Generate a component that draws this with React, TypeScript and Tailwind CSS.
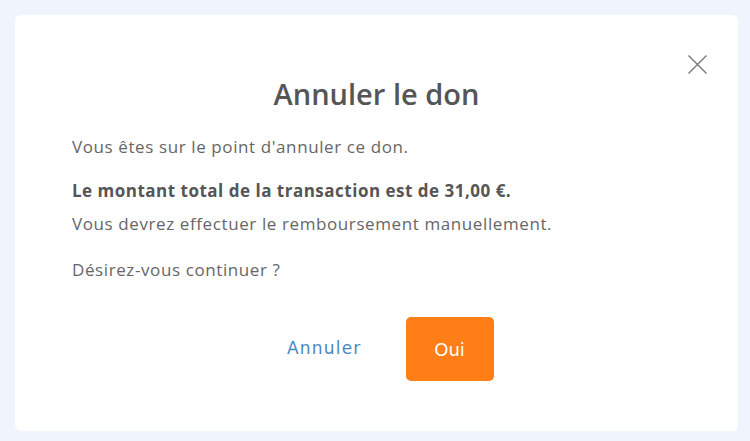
import React from "react";

export default function App() {
  return (
    <div className="min-h-[441px] w-[750px] bg-[#f0f5fd] pl-[15px] pr-[12px] pt-[15px] pb-[10px]">
      <div className="relative rounded-[6px] bg-white h-[416px] pt-[62px]" style={{ fontFamily: "'Open Sans', 'Noto Sans', sans-serif" }}>
        <button className="absolute right-[31px] top-[40px] w-[19px] h-[19px] text-[#777]">
          <svg viewBox="0 0 19 19" width="19" height="19" fill="none" stroke="currentColor" strokeWidth="1.4">
            <path d="M0.5 0.5 L18.5 18.5 M18.5 0.5 L0.5 18.5" />
          </svg>
        </button>
        <h1 className="text-center text-[29px] font-semibold text-[#555] leading-[34px]">Annuler le don</h1>
        <div className="pl-[57px] mt-[24px] text-[17px] text-[#666] leading-[24px] tracking-[0.6px]">
          <p>Vous êtes sur le point d'annuler ce don.</p>
          <p className="mt-[20px] font-bold text-[#555] tracking-[0.5px]">Le montant total de la transaction est de 31,00 €.</p>
          <p className="mt-[9px]">Vous devrez effectuer le remboursement manuellement.</p>
          <p className="mt-[22px]">Désirez-vous continuer ?</p>
        </div>
        <div className="mt-[35px] flex items-center pl-[272px] gap-[44px]" style={{ fontFamily: "'DejaVu Sans', Verdana, sans-serif" }}>
          <button className="text-[17px] text-[#4a87c3] tracking-[1.2px]">Annuler</button>
          <button className="w-[88px] h-[64px] rounded-[5px] bg-[#ff7e16] text-white text-[18px] font-normal">Oui</button>
        </div>
      </div>
    </div>
  );
}
